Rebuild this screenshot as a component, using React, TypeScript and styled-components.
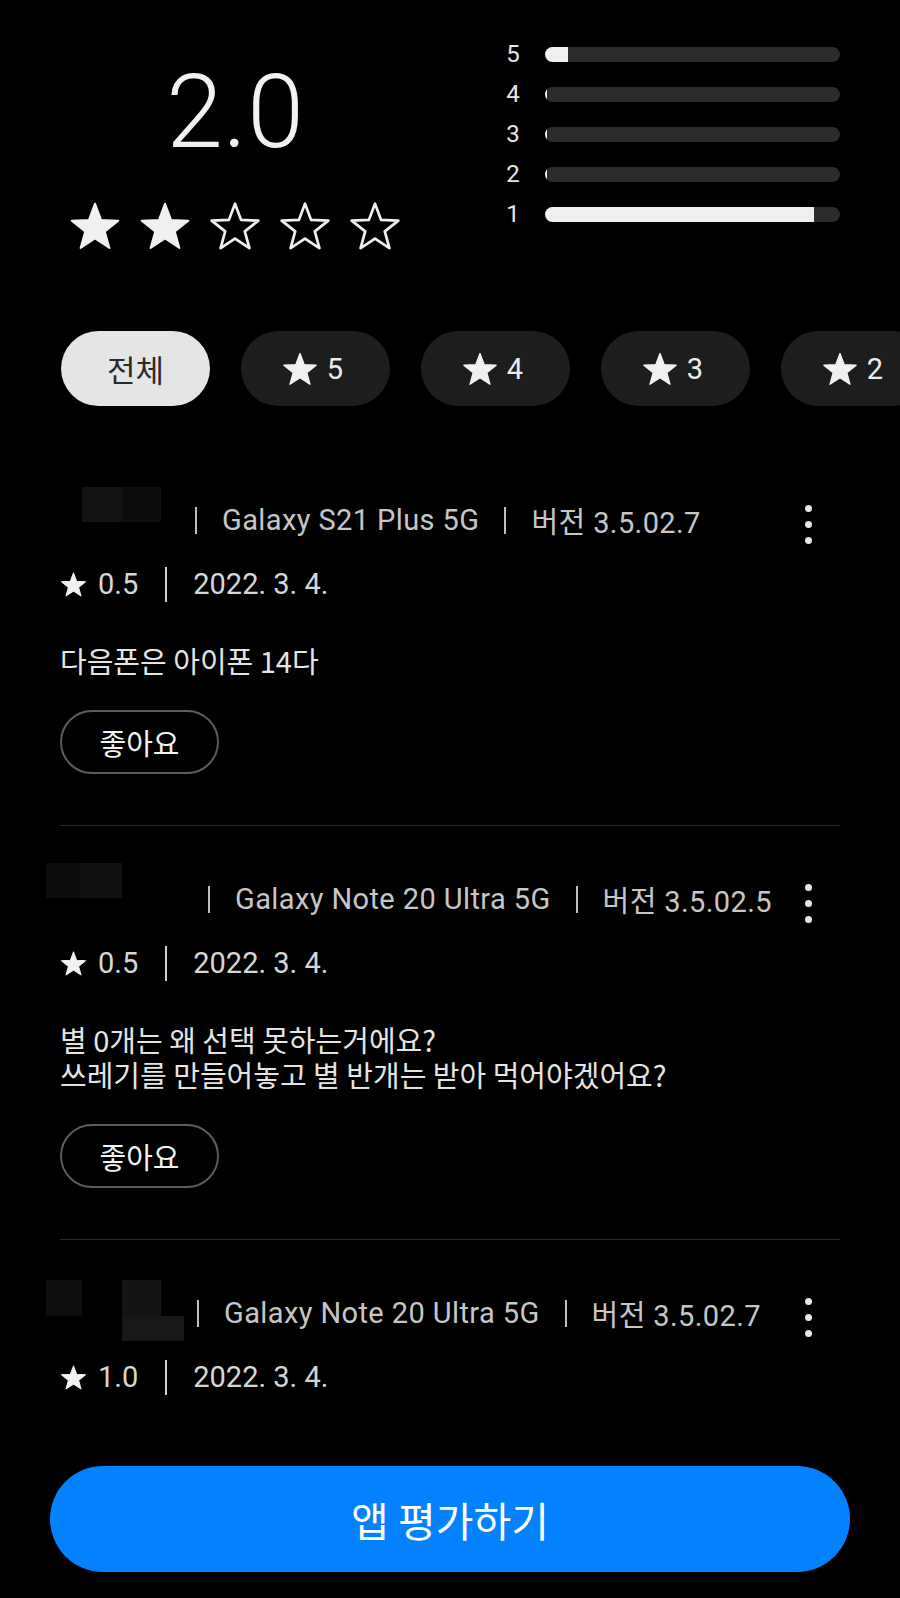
import React from "react";
import styled, { createGlobalStyle } from "styled-components";

const GlobalStyle = createGlobalStyle`
  html, body {
    margin: 0;
    padding: 0;
    background: #000;
    overflow: hidden;
  }
  body {
    font-family: Roboto, "Noto Sans CJK KR", sans-serif;
    -webkit-font-smoothing: antialiased;
  }
  * { box-sizing: border-box; }
`;

const STAR_PATH =
  "M50 0 L62.34 33.01 L97.55 34.55 L69.97 56.49 L79.39 90.45 L50 71 L20.61 90.45 L30.03 56.49 L2.45 34.55 L37.66 33.01 Z";

const StarIcon: React.FC<{ w: number; h: number; filled?: boolean; color?: string }> = ({
  w,
  h,
  filled = true,
  color = "#f0f0f0",
}) => (
  <svg width={w} height={h} viewBox="-3 -3 106 97" style={{ flexShrink: 0, display: "block" }}>
    <path
      d={STAR_PATH}
      fill={filled ? color : "none"}
      stroke={color}
      strokeWidth={filled ? 4 : 5.5}
      strokeLinejoin="round"
    />
  </svg>
);

const Screen = styled.div`
  height: 100vh;
  display: flex;
  flex-direction: column;
  background: #000;
`;

const Scroll = styled.div`
  flex: 1;
  min-height: 0;
  overflow: hidden;
`;

const Summary = styled.section`
  display: grid;
  grid-template-columns: 350px 1fr;
  column-gap: 87px;
  padding: 0 60px;
`;

const ScoreCol = styled.div`
  padding-top: 61px;
  display: flex;
  flex-direction: column;
  align-items: center;
`;

const Score = styled.div`
  font-family: Roboto, sans-serif;
  font-weight: 300;
  font-size: 102px;
  line-height: 102px;
  color: #f2f2f2;
`;

const BigStars = styled.div`
  margin-top: 39px;
  display: flex;
  gap: 18px;
`;

const BarsCol = styled.div`
  padding-top: 34px;
  display: flex;
  flex-direction: column;
`;

const BarRow = styled.div`
  height: 40px;
  display: flex;
  align-items: center;
`;

const BarLabel = styled.span`
  width: 32px;
  text-align: center;
  font-family: Roboto, sans-serif;
  font-size: 24px;
  color: #e6e6e6;
`;

const Track = styled.div`
  flex: 1;
  margin-left: 16px;
  height: 15px;
  border-radius: 8px;
  background: #2c2c2c;
  overflow: hidden;
`;

const Fill = styled.div`
  height: 100%;
  background: #efefef;
`;

const ChipRow = styled.div`
  margin-top: 81px;
  display: flex;
  gap: 31px;
  padding-left: 61px;
  overflow: hidden;
`;

const Chip = styled.button<{ $active?: boolean }>`
  flex-shrink: 0;
  width: 149px;
  height: 75px;
  border: none;
  border-radius: 38px;
  display: flex;
  align-items: center;
  justify-content: center;
  gap: 9px;
  padding: 0 ${(p) => (p.$active ? "0" : "6px")} 0 0;
  background: ${(p) => (p.$active ? "#e5e5e5" : "#1d1d1d")};
  color: ${(p) => (p.$active ? "#2a2a2a" : "#ececec")};
  font-family: Roboto, "Noto Sans CJK KR", sans-serif;
  font-size: ${(p) => (p.$active ? "31px" : "29px")};
`;

const ReviewList = styled.div`
  margin-top: 41px;
  padding: 0 60px;
`;

const Review = styled.article<{ $last?: boolean }>`
  padding-top: 43px;
  padding-bottom: 51px;
  border-bottom: ${(p) => (p.$last ? "none" : "1px solid #2b2b2b")};
`;

const HeaderRow = styled.div`
  height: 60px;
  display: flex;
  align-items: center;
  font-size: 29px;
  letter-spacing: 0.4px;
  color: #c6c6c6;
  white-space: nowrap;
`;

const NameMask = styled.svg`
  flex-shrink: 0;
  overflow: visible;
  display: block;
`;

const Sep = styled.span`
  flex-shrink: 0;
  width: 2px;
  height: 27px;
  margin: 0 25px;
  background: #bdbdbd;
`;

const Kebab = styled.button`
  margin-left: auto;
  flex-shrink: 0;
  width: 64px;
  height: 60px;
  padding: 8px 0 0;
  border: none;
  background: transparent;
  display: flex;
  flex-direction: column;
  align-items: center;
  justify-content: center;
  gap: 9px;
`;

const Dot = styled.span`
  width: 7px;
  height: 7px;
  border-radius: 50%;
  background: #e6e6e6;
`;

const MetaRow = styled.div`
  margin-top: 2px;
  height: 64px;
  display: flex;
  align-items: center;
  font-size: 29px;
  color: #d6d6d6;
`;

const MetaScore = styled.span`
  margin-left: 11px;
`;

const MetaSep = styled.span`
  width: 2px;
  height: 35px;
  margin: 0 26px 0 27px;
  background: #cfcfcf;
`;

const Body = styled.p`
  margin: 27px 0 0;
  font-family: "Noto Sans CJK KR", sans-serif;
  font-size: 29px;
  line-height: 35px;
  color: #e4e4e4;
  white-space: pre-line;
`;

const LikeButton = styled.button`
  margin-top: 32px;
  width: 159px;
  height: 64px;
  border: 2px solid #5c5c5c;
  border-radius: 32px;
  background: transparent;
  color: #f2f2f2;
  font-family: "Noto Sans CJK KR", sans-serif;
  font-size: 29px;
  display: flex;
  align-items: center;
  justify-content: center;
  padding: 0;
`;

const Footer = styled.footer`
  padding: 46px 50px 26px;
  background: #000;
`;

const RateButton = styled.button`
  width: 100%;
  height: 106px;
  border: none;
  border-radius: 53px;
  background: #0381fe;
  color: #fff;
  font-family: "Noto Sans CJK KR", sans-serif;
  font-size: 41px;
  display: flex;
  align-items: center;
  justify-content: center;
`;

type Rect = { x: number; y: number; w: number; h: number; c: string };

type ReviewData = {
  nameWidth: number;
  mask: Rect[];
  device: string;
  version: string;
  score: string;
  date: string;
  body?: string;
};

const reviews: ReviewData[] = [
  {
    nameWidth: 110,
    mask: [
      { x: 22, y: -3, w: 40, h: 35, c: "#141414" },
      { x: 62, y: -3, w: 39, h: 35, c: "#0d0d0d" },
    ],
    device: "Galaxy S21 Plus 5G",
    version: "버전 3.5.02.7",
    score: "0.5",
    date: "2022. 3. 4.",
    body: "다음폰은 아이폰 14다",
  },
  {
    nameWidth: 123,
    mask: [
      { x: -14, y: -6, w: 34, h: 35, c: "#0c0c0c" },
      { x: 20, y: -6, w: 42, h: 35, c: "#111111" },
    ],
    device: "Galaxy Note 20 Ultra 5G",
    version: "버전 3.5.02.5",
    score: "0.5",
    date: "2022. 3. 4.",
    body: "별 0개는 왜 선택 못하는거에요?\n쓰레기를 만들어놓고 별 반개는 받아 먹어야겠어요?",
  },
  {
    nameWidth: 112,
    mask: [
      { x: -14, y: -3, w: 36, h: 36, c: "#0e0e0e" },
      { x: 62, y: -3, w: 39, h: 36, c: "#151515" },
      { x: 62, y: 33, w: 62, h: 25, c: "#181818" },
    ],
    device: "Galaxy Note 20 Ultra 5G",
    version: "버전 3.5.02.7",
    score: "1.0",
    date: "2022. 3. 4.",
  },
];

const bars = [
  { label: "5", pct: 7.8 },
  { label: "4", pct: 0.7 },
  { label: "3", pct: 0.7 },
  { label: "2", pct: 0.7 },
  { label: "1", pct: 91.2 },
];

export default function App() {
  return (
    <>
      <GlobalStyle />
      <Screen>
        <Scroll>
          <Summary>
            <ScoreCol>
              <Score>2.0</Score>
              <BigStars>
                {[0, 1, 2, 3, 4].map((i) => (
                  <StarIcon key={i} w={52} h={48} filled={i < 2} />
                ))}
              </BigStars>
            </ScoreCol>
            <BarsCol>
              {bars.map((b) => (
                <BarRow key={b.label}>
                  <BarLabel>{b.label}</BarLabel>
                  <Track>
                    <Fill style={{ width: `${b.pct}%` }} />
                  </Track>
                </BarRow>
              ))}
            </BarsCol>
          </Summary>

          <ChipRow>
            <Chip $active>전체</Chip>
            {["5", "4", "3", "2", "1"].map((n) => (
              <Chip key={n}>
                <StarIcon w={36} h={34} />
                <span>{n}</span>
              </Chip>
            ))}
          </ChipRow>

          <ReviewList>
            {reviews.map((r, idx) => (
              <Review key={idx} $last={idx === reviews.length - 1}>
                <HeaderRow>
                  <NameMask width={r.nameWidth} height={60}>
                    {r.mask.map((m, i) => (
                      <rect key={i} x={m.x} y={m.y} width={m.w} height={m.h} fill={m.c} />
                    ))}
                  </NameMask>
                  <Sep />
                  <span>{r.device}</span>
                  <Sep />
                  <span>{r.version}</span>
                  <Kebab aria-label="더보기">
                    <Dot />
                    <Dot />
                    <Dot />
                  </Kebab>
                </HeaderRow>
                <MetaRow>
                  <StarIcon w={27} h={25} color="#f2f2f2" />
                  <MetaScore>{r.score}</MetaScore>
                  <MetaSep />
                  <span>{r.date}</span>
                </MetaRow>
                {r.body && (
                  <>
                    <Body>{r.body}</Body>
                    <LikeButton>좋아요</LikeButton>
                  </>
                )}
              </Review>
            ))}
          </ReviewList>
        </Scroll>
        <Footer>
          <RateButton>앱 평가하기</RateButton>
        </Footer>
      </Screen>
    </>
  );
}
